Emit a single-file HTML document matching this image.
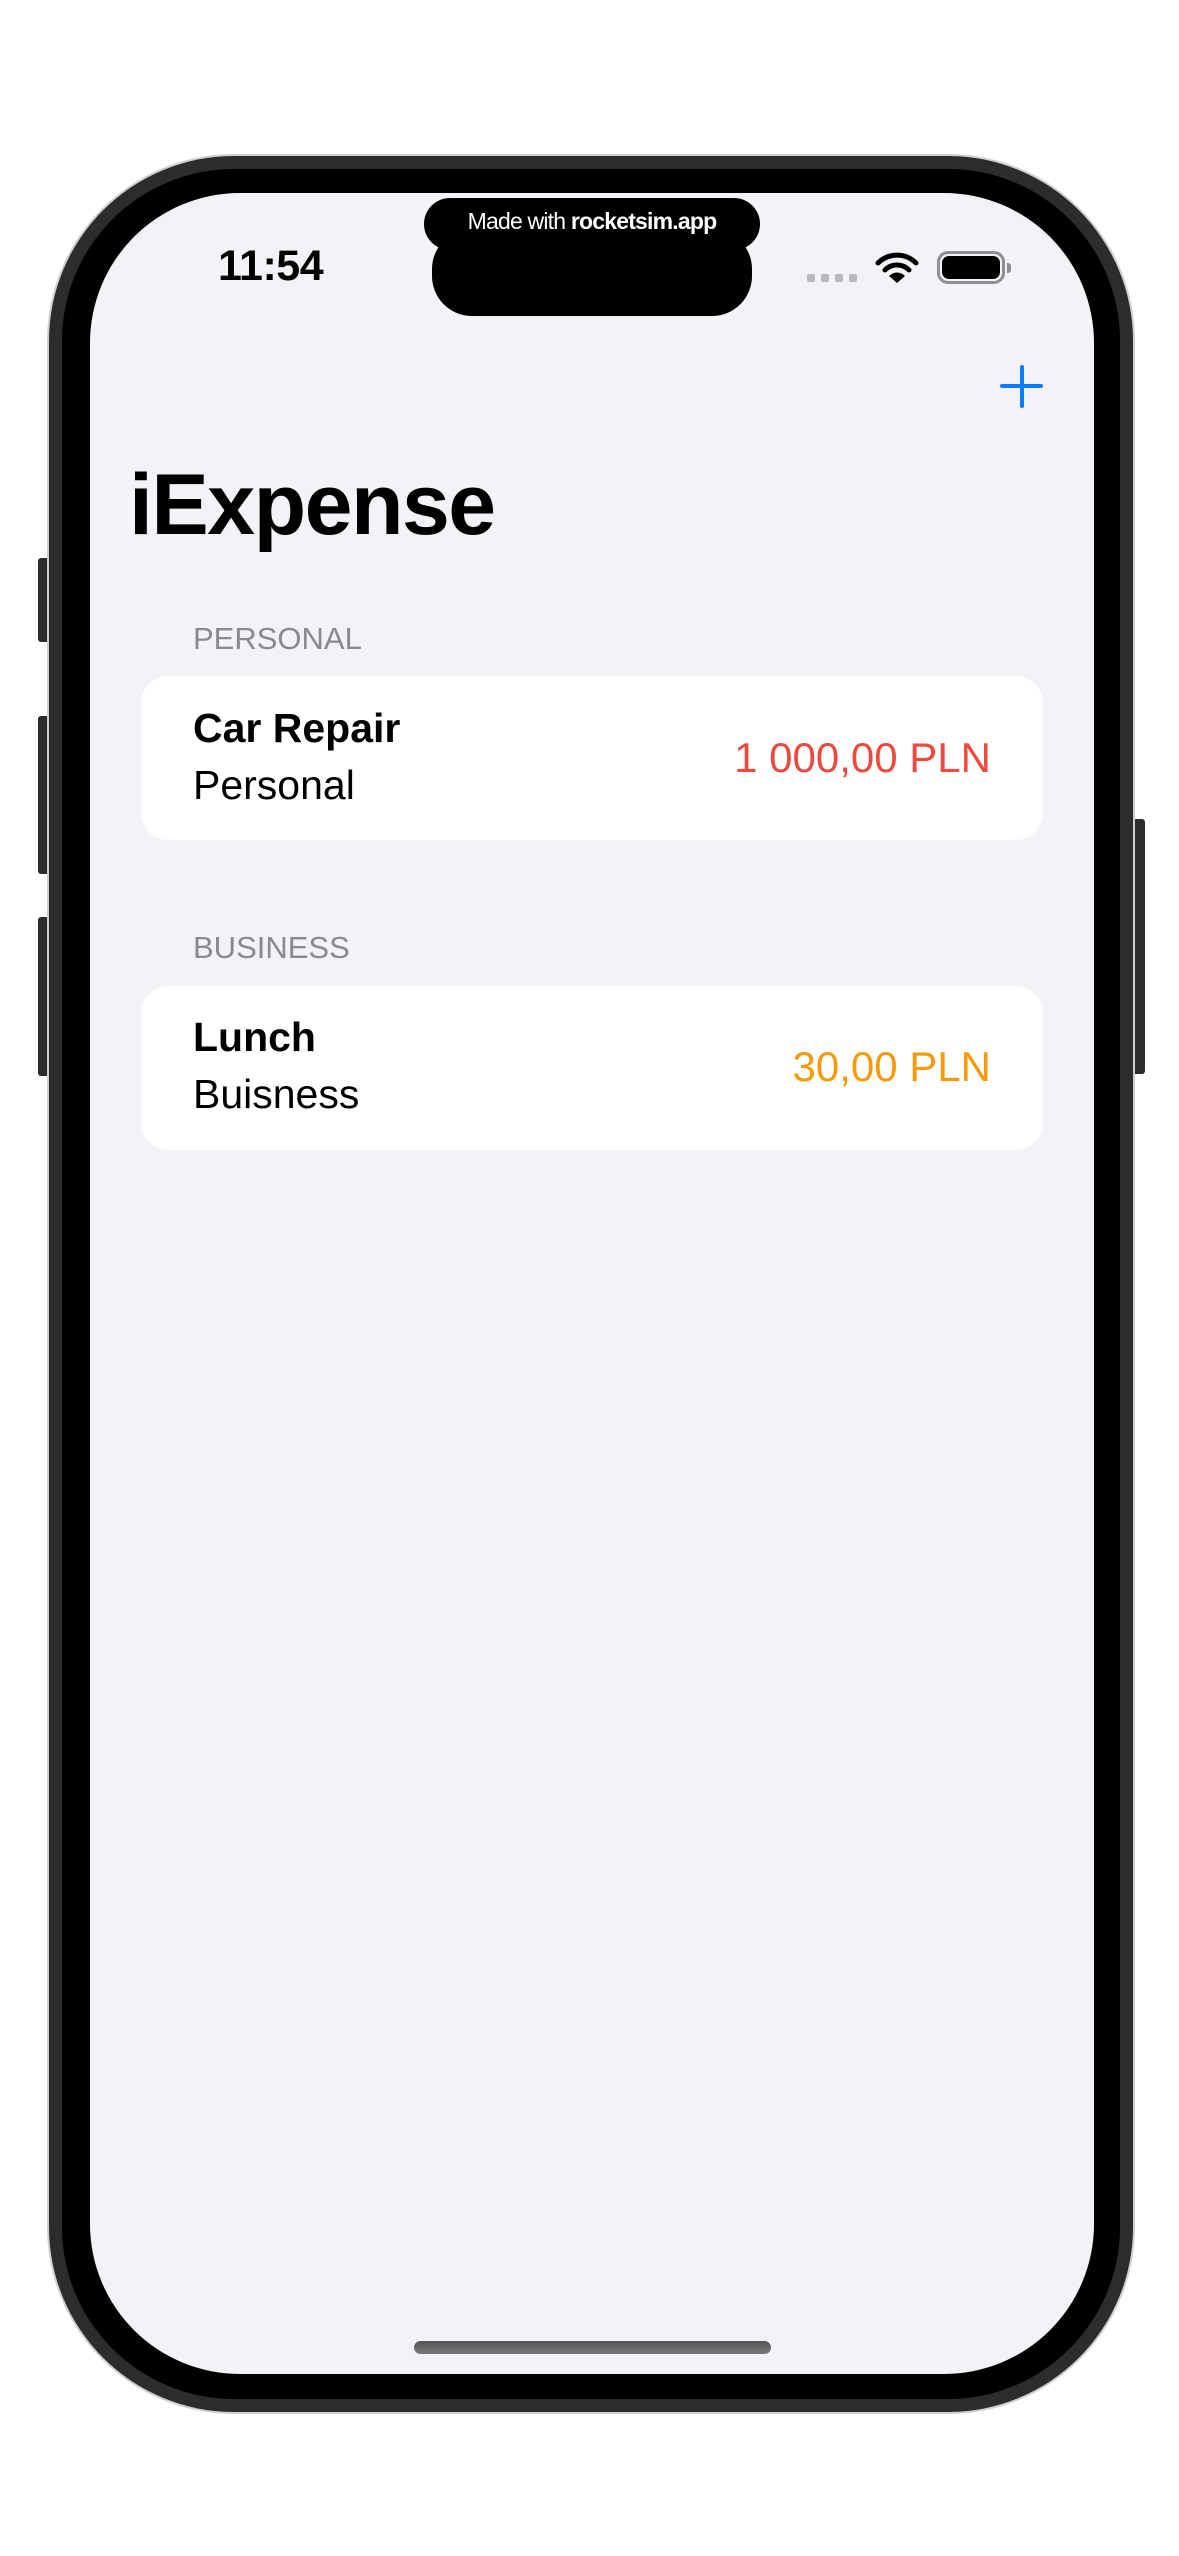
<!DOCTYPE html>
<html><head><meta charset="utf-8"><style>
*{margin:0;padding:0;box-sizing:border-box}
body{width:1179px;height:2556px;background:#fff;position:relative;overflow:hidden;font-family:"Liberation Sans",sans-serif}
.abs{position:absolute}
.outer{left:49px;top:156px;width:1084px;height:2256px;border-radius:185px;background:#2c2c2c;box-shadow:0 0 0 2px #cfcfcf}
.bezel{left:62px;top:169px;width:1058px;height:2230px;border-radius:172px;background:#000}
.screen{left:90px;top:193px;width:1004px;height:2181px;border-radius:150px;background:#f2f2f7;overflow:hidden}
.btn{background:#2c2c2c;border-radius:3px}
.t{position:absolute;white-space:nowrap}
.card{position:absolute;left:141px;width:902px;height:164px;background:#fff;border-radius:27px}
</style></head><body>
<div class="abs btn" style="left:38px;top:558px;width:14px;height:84px"></div>
<div class="abs btn" style="left:38px;top:716px;width:14px;height:158px"></div>
<div class="abs btn" style="left:38px;top:917px;width:14px;height:159px"></div>
<div class="abs btn" style="left:1130px;top:819px;width:15px;height:255px"></div>
<div class="abs outer"></div>
<div class="abs bezel"></div>
<div class="abs screen"></div>
<div class="abs" style="left:432px;top:229px;width:320px;height:87px;background:#000;border-radius:40px"></div>
<div class="abs" style="left:424px;top:198px;width:336px;height:52px;background:#000;border-radius:26px"></div>
<div class="t" style="left:424px;top:208px;width:336px;text-align:center;color:#fff;font-size:23px;letter-spacing:-0.8px">Made with <b>rocketsim.app</b></div>
<div class="t" style="left:218px;top:242px;font-size:43px;font-weight:bold;color:#000;letter-spacing:-0.5px">11:54</div>
<div class="abs" style="left:807px;top:274px;width:8px;height:8px;border-radius:2px;background:#b8b8bd"></div>
<div class="abs" style="left:821px;top:274px;width:8px;height:8px;border-radius:2px;background:#b8b8bd"></div>
<div class="abs" style="left:835px;top:274px;width:8px;height:8px;border-radius:2px;background:#b8b8bd"></div>
<div class="abs" style="left:849px;top:274px;width:8px;height:8px;border-radius:2px;background:#b8b8bd"></div>
<svg class="abs" style="left:875px;top:252px" width="44" height="32" viewBox="0 0 44 32">
<path d="M3 11 A27 27 0 0 1 41 11" fill="none" stroke="#000" stroke-width="5" stroke-linecap="round"/>
<path d="M10 18 A17 17 0 0 1 34 18" fill="none" stroke="#000" stroke-width="5" stroke-linecap="round"/>
<path d="M22 31 L14 24 A11 11 0 0 1 30 24 Z" fill="#000"/>
</svg>
<div class="abs" style="left:937px;top:251px;width:68px;height:33px;border:3px solid #8e8e93;border-radius:11px"></div>
<div class="abs" style="left:942px;top:256px;width:58px;height:23px;background:#000;border-radius:7px"></div>
<div class="abs" style="left:1007px;top:263px;width:4px;height:10px;background:#8e8e93;border-radius:0 3px 3px 0"></div>
<div class="abs" style="left:1020px;top:365px;width:4px;height:43px;background:#0a7cff;border-radius:2px"></div>
<div class="abs" style="left:1000px;top:384px;width:43px;height:4px;background:#0a7cff;border-radius:2px"></div>
<div class="t" style="left:129px;top:456px;font-size:86px;font-weight:bold;color:#000;letter-spacing:-1.5px">iExpense</div>
<div class="t" style="left:193px;top:621px;font-size:31px;color:#8a8a8e">PERSONAL</div>
<div class="card" style="top:676px"></div>
<div class="t" style="left:193px;top:705px;font-size:41px;font-weight:bold;color:#000">Car Repair</div>
<div class="t" style="left:193px;top:762px;font-size:41px;color:#000">Personal</div>
<div class="t" style="right:188px;top:734px;font-size:42px;color:#eb4a3f">1 000,00 PLN</div>
<div class="t" style="left:193px;top:930px;font-size:31px;color:#8a8a8e">BUSINESS</div>
<div class="card" style="top:986px"></div>
<div class="t" style="left:193px;top:1014px;font-size:41px;font-weight:bold;color:#000">Lunch</div>
<div class="t" style="left:193px;top:1071px;font-size:41px;color:#000">Buisness</div>
<div class="t" style="right:188px;top:1043px;font-size:42px;color:#f59a0c">30,00 PLN</div>
<div class="abs" style="left:414px;top:2341px;width:357px;height:13px;border-radius:7px;background:linear-gradient(#555,#7a7a7e)"></div>
</body></html>
